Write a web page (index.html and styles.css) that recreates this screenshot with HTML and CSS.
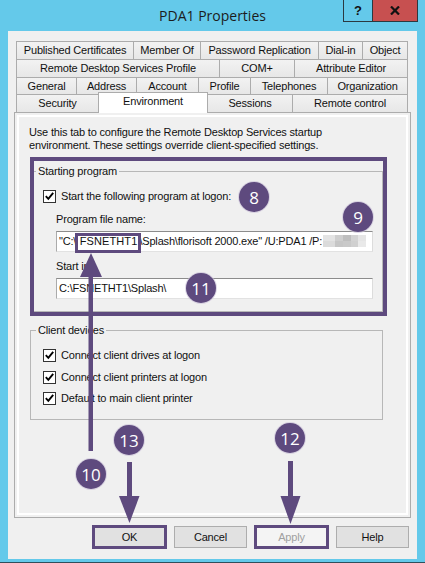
FILE: index.html
```html
<!DOCTYPE html>
<html>
<head>
<meta charset="utf-8">
<title>PDA1 Properties</title>
<link rel="stylesheet" href="styles.css">
</head>
<body>
<div class="window">
  <header class="titlebar">
    <div class="title">PDA1 Properties</div>
    <div class="caption">
      <div class="cap-btn help">?</div>
      <div class="cap-btn close"><svg width="10" height="9" viewBox="0 0 10 9"><path d="M1 0.5 L9 8.5 M9 0.5 L1 8.5" stroke="#111" stroke-width="2.2"/></svg></div>
    </div>
  </header>

  <main class="client">
    <div class="tabs">
      <div class="tabrow row1">
        <div class="tab">Published Certificates</div>
        <div class="tab">Member Of</div>
        <div class="tab">Password Replication</div>
        <div class="tab">Dial-in</div>
        <div class="tab">Object</div>
      </div>
      <div class="tabrow row2">
        <div class="tab">Remote Desktop Services Profile</div>
        <div class="tab">COM+</div>
        <div class="tab">Attribute Editor</div>
      </div>
      <div class="tabrow row3">
        <div class="tab">General</div>
        <div class="tab">Address</div>
        <div class="tab">Account</div>
        <div class="tab">Profile</div>
        <div class="tab">Telephones</div>
        <div class="tab">Organization</div>
      </div>
      <div class="tabrow row4">
        <div class="tab">Security</div>
        <div class="tab active">Environment</div>
        <div class="tab">Sessions</div>
        <div class="tab">Remote control</div>
      </div>
    </div>

    <section class="panel">
      <p class="desc">Use this tab to configure the Remote Desktop Services startup<br>environment. These settings override client-specified settings.</p>

      <fieldset class="group start">
        <legend>Starting program</legend>
        <div class="group-body">
          <div class="check"><span class="box"><svg width="11" height="11" viewBox="0 0 11 11"><path d="M1.8 5.2 L4.3 7.8 L9.2 1.8" fill="none" stroke="#000" stroke-width="1.9"/></svg></span>Start the following program at logon:</div>
          <div class="indent">
            <div class="field-label first">Program file name:</div>
            <div class="textbox">"C:\<span class="hl">FSNETHT1</span>\Splash\florisoft 2000.exe" /U:PDA1 /P:<span class="blur"></span></div>
            <div class="field-label">Start in:</div>
            <div class="textbox">C:\FSNETHT1\Splash\</div>
          </div>
        </div>
      </fieldset>

      <fieldset class="group devices">
        <legend>Client devices</legend>
        <div class="group-body">
          <div class="check"><span class="box"><svg width="11" height="11" viewBox="0 0 11 11"><path d="M1.8 5.2 L4.3 7.8 L9.2 1.8" fill="none" stroke="#000" stroke-width="1.9"/></svg></span>Connect client drives at logon</div>
          <div class="check"><span class="box"><svg width="11" height="11" viewBox="0 0 11 11"><path d="M1.8 5.2 L4.3 7.8 L9.2 1.8" fill="none" stroke="#000" stroke-width="1.9"/></svg></span>Connect client printers at logon</div>
          <div class="check"><span class="box"><svg width="11" height="11" viewBox="0 0 11 11"><path d="M1.8 5.2 L4.3 7.8 L9.2 1.8" fill="none" stroke="#000" stroke-width="1.9"/></svg></span>Default to main client printer</div>
        </div>
      </fieldset>
    </section>

    <div class="buttons">
      <div class="btn marked">OK</div>
      <div class="btn">Cancel</div>
      <div class="btn disabled marked">Apply</div>
      <div class="btn">Help</div>
    </div>
  </main>

  <div class="mark mark-start"></div>
  <div class="mark mark-path"></div>

  <svg class="arrows" width="425" height="563" viewBox="0 0 425 563">
    <rect x="88.5" y="272" width="4.5" height="179" fill="#5E4A7E"/>
    <polygon points="80,277 91,253 102,277" fill="#5E4A7E"/>
    <rect x="127" y="462" width="5" height="36" fill="#5E4A7E"/>
    <polygon points="119,496 139.5,496 129.5,523" fill="#5E4A7E"/>
    <rect x="288" y="461" width="5" height="37" fill="#5E4A7E"/>
    <polygon points="280.5,496 300.5,496 290.5,524" fill="#5E4A7E"/>
  </svg>

  <div class="badge b8">8</div>
  <div class="badge b9">9</div>
  <div class="badge b11">11</div>
  <div class="badge b10">10</div>
  <div class="badge b13">13</div>
  <div class="badge b12">12</div>
</div>
</body>
</html>
```

FILE: styles.css
```css
* { box-sizing: border-box; }

html, body {
  margin: 0;
  padding: 0;
}

body {
  width: 425px;
  height: 563px;
  overflow: hidden;
  background: #64C9EA;
  font-family: "Liberation Sans", Arial, sans-serif;
  font-size: 11px;
  letter-spacing: -0.18px;
  color: #000;
}

.window {
  position: relative;
  width: 425px;
  height: 563px;
  background: #64C9EA;
  border-bottom: 1px solid #2f4f5c;
}

/* Title bar */
.titlebar {
  height: 31px;
  display: grid;
  grid-template-columns: 1fr auto 1fr;
  align-items: start;
}

.title {
  grid-column: 2;
  font-family: "Open Sans", "Noto Sans", sans-serif;
  font-size: 14px;
  letter-spacing: 0;
  line-height: 31px;
  color: #1c1c1c;
}

.caption {
  grid-column: 3;
  justify-self: end;
  display: flex;
  margin-right: 7px;
}

.cap-btn {
  height: 22px;
  border: 1px solid #2b3940;
  border-top: none;
  display: flex;
  align-items: center;
  justify-content: center;
}

.help {
  width: 29px;
  border-right: none;
  font-weight: bold;
  font-size: 13px;
  color: #111;
}

.close {
  width: 46px;
  background: #C75050;
}

/* Client area */
.client {
  margin: 0 8px;
  height: 528px;
  background: #F0F0F0;
  padding: 10px 0 0 6px;
}

.tabs {
  margin-left: 2px;
  width: 392px;
}

.tabrow {
  display: grid;
  height: 18px;
}

.row1 { grid-template-columns: 117px 67px 118px 44px 1fr; }
.row2 { grid-template-columns: 203px 75px 1fr; }
.row3 { grid-template-columns: 60px 60px 62px 52px 77px 1fr; height: 17px; }
.row4 { grid-template-columns: 82px 109px 85px 1fr; }

.tab {
  border-top: 1px solid #ACACAC;
  border-left: 1px solid #ACACAC;
  background: linear-gradient(#F2F2F2, #E7E7E7);
  text-align: center;
  white-space: nowrap;
  line-height: 16px;
  color: #111;
}

.tab:last-child {
  border-right: 1px solid #ACACAC;
}

.tab.active {
  position: relative;
  z-index: 1;
  background: #FFFFFF;
  margin: -2px -1px -1px 0;
  border-right: 1px solid #ACACAC;
  line-height: 17px;
}

.panel {
  width: 397px;
  height: 406px;
  border: 1px solid #ACACAC;
  box-shadow: inset 0 0 0 2px #F0F0F0, inset 0 0 0 4px #FFFFFF;
  padding: 13px 0 0 15px;
}

.desc {
  margin: 0 0 0 -1px;
  line-height: 13px;
  color: #111;
}

.group {
  margin: 13px 0 0 0;
  padding: 0;
  width: 353px;
  border: 1px solid #B7B7B7;
  min-inline-size: 0;
}

.group legend {
  margin-left: 5px;
  padding: 0 2px;
  line-height: 13px;
  color: #111;
}

.start .group-body {
  padding: 12px 0 12px 12px;
}

.devices {
  margin-top: 12px;
}

.devices .group-body {
  padding: 12px 0 14px 12px;
}

.check {
  display: flex;
  align-items: center;
  height: 13px;
  line-height: 13px;
  gap: 5px;
  color: #111;
}

.devices .check + .check {
  margin-top: 8.5px;
}

.box {
  width: 13px;
  height: 13px;
  border: 1px solid #333;
  background: #fff;
  display: flex;
  align-items: center;
  justify-content: center;
  flex: none;
}

.indent {
  margin-left: 13px;
}

.field-label {
  margin-top: 8px;
  line-height: 13px;
  color: #111;
}

.field-label.first {
  margin-top: 10px;
}

.textbox {
  margin-top: 5px;
  width: 317px;
  height: 21px;
  border: 1px solid;
  border-color: #8C8C8C #DCDCDC #E2E2E2 #ABABAB;
  background: #fff;
  padding-left: 2px;
  line-height: 19px;
  white-space: nowrap;
  overflow: hidden;
  color: #111;
}

.hl {
  margin: 0 2px 0 3.5px;
  letter-spacing: 0.1px;
}

.blur {
  display: inline-block;
  vertical-align: -2px;
  margin-left: 1px;
  width: 43px;
  height: 12px;
  background:
    linear-gradient(90deg, #E3E3E3 0 12px, #CECECE 12px 20px, #BEBEBE 20px 28px, #D3D3D3 28px 35px, #E5E5E5 35px) top / 100% 6px no-repeat,
    linear-gradient(90deg, #DBDBDB 0 12px, #C6C6C6 12px 20px, #C9C9C9 20px 28px, #D0D0D0 28px 35px, #E9E9E9 35px) bottom / 100% 6px no-repeat;
}

/* Buttons */
.buttons {
  margin-top: 8px;
  display: flex;
  justify-content: flex-end;
  gap: 8px;
  padding-right: 8px;
}

.btn {
  width: 73px;
  height: 22px;
  border: 1px solid #ADADAD;
  background: #E1E1E1;
  display: flex;
  align-items: center;
  justify-content: center;
  color: #111;
}

.btn.disabled {
  background: #F4F4F4;
  border-color: #BFBFBF;
  color: #A0A0A0;
}

.btn.marked {
  outline: 3px solid #5E4A7E;
  outline-offset: -2px;
}

/* Annotations */
.mark {
  position: absolute;
  border: 4px solid #5E4A7E;
}

.mark-start {
  left: 30px;
  top: 157px;
  width: 357px;
  height: 159px;
}

.mark-path {
  left: 75px;
  top: 233px;
  width: 66px;
  height: 20px;
  border-width: 3px;
}

.arrows {
  position: absolute;
  left: 0;
  top: 0;
}

.badge {
  position: absolute;
  width: 30px;
  height: 30px;
  border-radius: 50%;
  background: #5E4A7E;
  box-shadow: 0 0 0 1px rgba(200, 190, 215, 0.6);
  color: #fff;
  font-family: "Open Sans", "Noto Sans", sans-serif;
  font-size: 17px;
  letter-spacing: 0;
  display: flex;
  align-items: center;
  justify-content: center;
  line-height: 1;
}

.b8  { left: 239px; top: 182px; }
.b9  { left: 343px; top: 202px; }
.b11 { left: 186px; top: 273px; }
.b10 { left: 76px;  top: 459px; }
.b13 { left: 114px; top: 425px; }
.b12 { left: 275px; top: 423px; }
```
